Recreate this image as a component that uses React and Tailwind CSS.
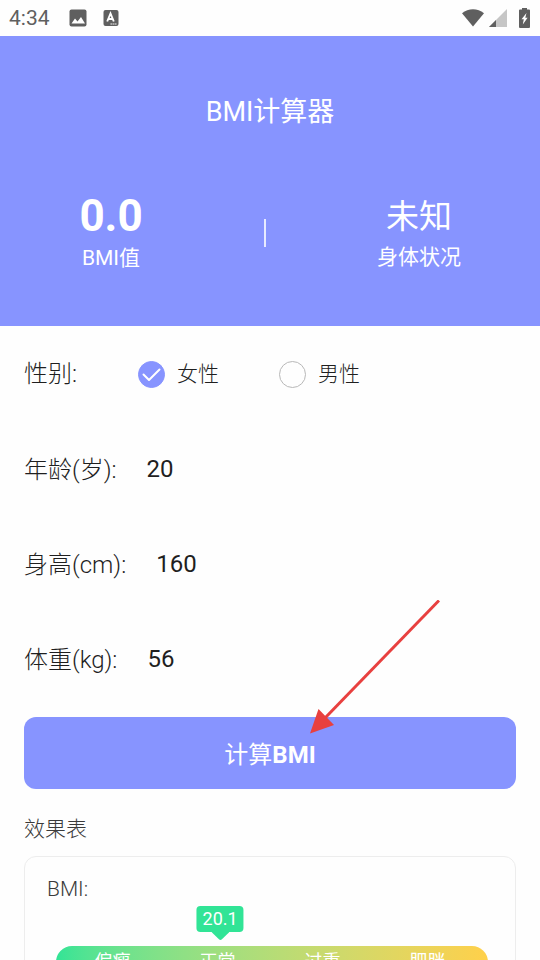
import React, { useState } from 'react';

const levels = ['偏瘦', '正常', '过重', '肥胖'];

const genders = [
    { value: 'female', label: '女性' },
    { value: 'male', label: '男性' },
];

const getStatus = (bmi) => {
    if (bmi < 18.5) return '偏瘦';
    if (bmi < 24) return '正常';
    if (bmi < 28) return '过重';
    return '肥胖';
};

const StatusBar = () => (
    <div className="flex h-9 items-center justify-between pl-[9px] pr-[10px] text-[#5f5f5f]">
        <div className="flex items-center">
            <span className="w-[60px] text-[21px] leading-6">4:34</span>
            <svg width="18" height="18" viewBox="0 0 18 18" className="mr-4">
                <rect x="0.5" y="0.5" width="17" height="17" rx="2" fill="currentColor" />
                <path d="M2.5 14.5 6 9.5l2.500 3L12 8l4 6.500z" fill="#fff" />
            </svg>
            <svg width="16" height="18" viewBox="0 0 16 18">
                <rect x="0.5" y="1" width="15" height="16" rx="2" fill="currentColor" />
                <path d="M4.200 12.500 7.500 4.500 10.800 12.500M5.500 10h4" fill="none" stroke="#fff" strokeWidth="1.900" />
                <path d="M7.500 15h6.500" stroke="#fff" strokeWidth="1.200" strokeDasharray="1.400 0.600" />
            </svg>
        </div>
        <div className="flex items-center">
            <svg width="24" height="20" viewBox="0 0 24 20" className="mr-1">
                <path d="M1 5.200C7.500-.1 16.500-.1 23 5.200L12 18.500z" fill="currentColor" />
            </svg>
            <svg width="18" height="18" viewBox="0 0 18 18" className="mr-3">
                <path d="M18 0v18H0z" fill="#c6c6c6" />
                <path d="M7 11v7H0z" fill="currentColor" />
            </svg>
            <svg width="11" height="20" viewBox="0 0 11 20">
                <path d="M3 0h5v1.500h2q1 0 1 1v16.500q0 1-1 1h-9q-1 0-1-1v-16.500q0-1 1-1H3z" fill="currentColor" />
                <path d="M7.500 5 2.500 11.200h2.300L3.800 16.500 8.600 9.800H6.300z" fill="#fff" />
            </svg>
        </div>
    </div>
);

const Field = ({ id, label, value, onChange }) => (
    <div className="flex h-[95px] items-center gap-[30px]">
        <label htmlFor={id} className="shrink-0">{label}</label>
        <input
            id={id}
            type="text"
            inputMode="numeric"
            value={value}
            onChange={(e) => onChange(e.target.value)}
            className="min-w-0 flex-1 bg-transparent pb-[2px] font-normal outline-none"
        />
    </div>
);

const App = () => {
    const [gender, setGender] = useState('female');
    const [age, setAge] = useState('20');
    const [height, setHeight] = useState('160');
    const [weight, setWeight] = useState('56');
    const [bmi, setBmi] = useState(null);

    const calculate = () => {
        const m = Number(height) / 100;
        const result = Number(weight) / (m * m);
        if (Number.isFinite(result)) {
            setBmi(result);
        }
    };

    return (
        <div className="h-screen overflow-hidden bg-[#fefefe] font-[Roboto,'Noto_Sans_CJK_SC',sans-serif] text-[#1f1f1f]">
            <StatusBar />

            <header className="h-[290px] bg-[#8794ff] pt-[58px] text-white">
                <h1 className="text-center text-[27px] leading-9">BMI计算器</h1>
                <div className="mt-[61px] flex items-center justify-between pl-[69px] pr-[79px]">
                    <div className="flex w-[84px] flex-col items-center">
                        <span className="text-[44px] font-bold leading-[50px]">{bmi ? bmi.toFixed(1) : '0.0'}</span>
                        <span className="text-[21px] leading-[34px]">BMI值</span>
                    </div>
                    <div className="h-7 w-[2px] bg-white/80" />
                    <div className="flex w-[84px] flex-col items-center">
                        <span className="text-[33px] leading-[48px]">{bmi ? getStatus(bmi) : '未知'}</span>
                        <span className="text-[21px] leading-8">身体状况</span>
                    </div>
                </div>
            </header>

            <main className="px-6 font-light">
                <form onSubmit={(e) => { e.preventDefault(); calculate(); }} className="text-[24px] leading-8">
                    <fieldset className="flex h-24 items-center" aria-labelledby="gender">
                        <span id="gender" className="w-[114px]">性别:</span>
                        {genders.map(g => (
                            <label key={g.value} className="flex w-[141px] items-center gap-3 text-[21px]">
                                <span className="relative flex">
                                    <input
                                        type="radio"
                                        name="gender"
                                        value={g.value}
                                        checked={gender === g.value}
                                        onChange={() => setGender(g.value)}
                                        className="size-[27px] appearance-none rounded-full border border-[#b8b8b8] checked:border-[#8794ff] checked:bg-[#8794ff]"
                                    />
                                    {gender === g.value && (
                                        <svg viewBox="0 0 27 27" className="pointer-events-none absolute inset-0">
                                            <path d="M5.500 13.500 11 19 21.500 8.500" fill="none" stroke="#fff" strokeWidth="2" strokeLinecap="round" strokeLinejoin="round" />
                                        </svg>
                                    )}
                                </span>
                                {g.label}
                            </label>
                        ))}
                    </fieldset>
                    <Field id="age" label="年龄(岁):" value={age} onChange={setAge} />
                    <Field id="height" label="身高(cm):" value={height} onChange={setHeight} />
                    <Field id="weight" label="体重(kg):" value={weight} onChange={setWeight} />

                    <div className="relative mt-[10px]">
                        <button type="submit" className="h-[72px] w-full rounded-xl bg-[#8794ff] pt-1 font-normal text-white">
                            计算<span className="font-bold">BMI</span>
                        </button>
                        {/* 指向按钮的箭头 */}
                        <svg width="130" height="134" viewBox="0 0 130 134" className="pointer-events-none absolute bottom-[55px] left-[calc(50%+40px)]">
                            <path d="M129 0.500 15 118" stroke="#e8403f" strokeWidth="3" />
                            <path d="M0 133.500 8.500 109 24 125z" fill="#e8403f" />
                        </svg>
                    </div>
                </form>

                <h2 className="mt-6 text-[21px] leading-8 text-[#3a3a3a]">效果表</h2>
                <section className="mt-[11px] rounded-xl border border-[#ededed] pb-8 pl-[31px] pr-[27px] pt-4">
                    <p className="-ml-[9px] text-[21px] leading-8 text-[#3a3a3a]">BMI:</p>
                    <div className="relative mt-[41px] font-normal">
                        <div className="absolute bottom-full left-[38%] mb-[6px] -translate-x-1/2">
                            <div className="rounded bg-[#31e496] px-[6px] text-[18px] leading-[26px] text-white">20.1</div>
                            <svg width="18" height="8" viewBox="0 0 18 8" className="mx-auto block">
                                <path d="M0 0h18l-7.500 7.300q-1.500 1.400-3 0z" fill="#31e496" />
                            </svg>
                        </div>
                        <div className="grid grid-cols-4 rounded-full bg-linear-to-r from-[#31e496] to-[#ffd04a] pl-1 pr-2 text-center text-[18px] leading-8 text-white">
                            {levels.map(l => <span key={l}>{l}</span>)}
                        </div>
                    </div>
                </section>
            </main>
        </div>
    );
}

export default App;
